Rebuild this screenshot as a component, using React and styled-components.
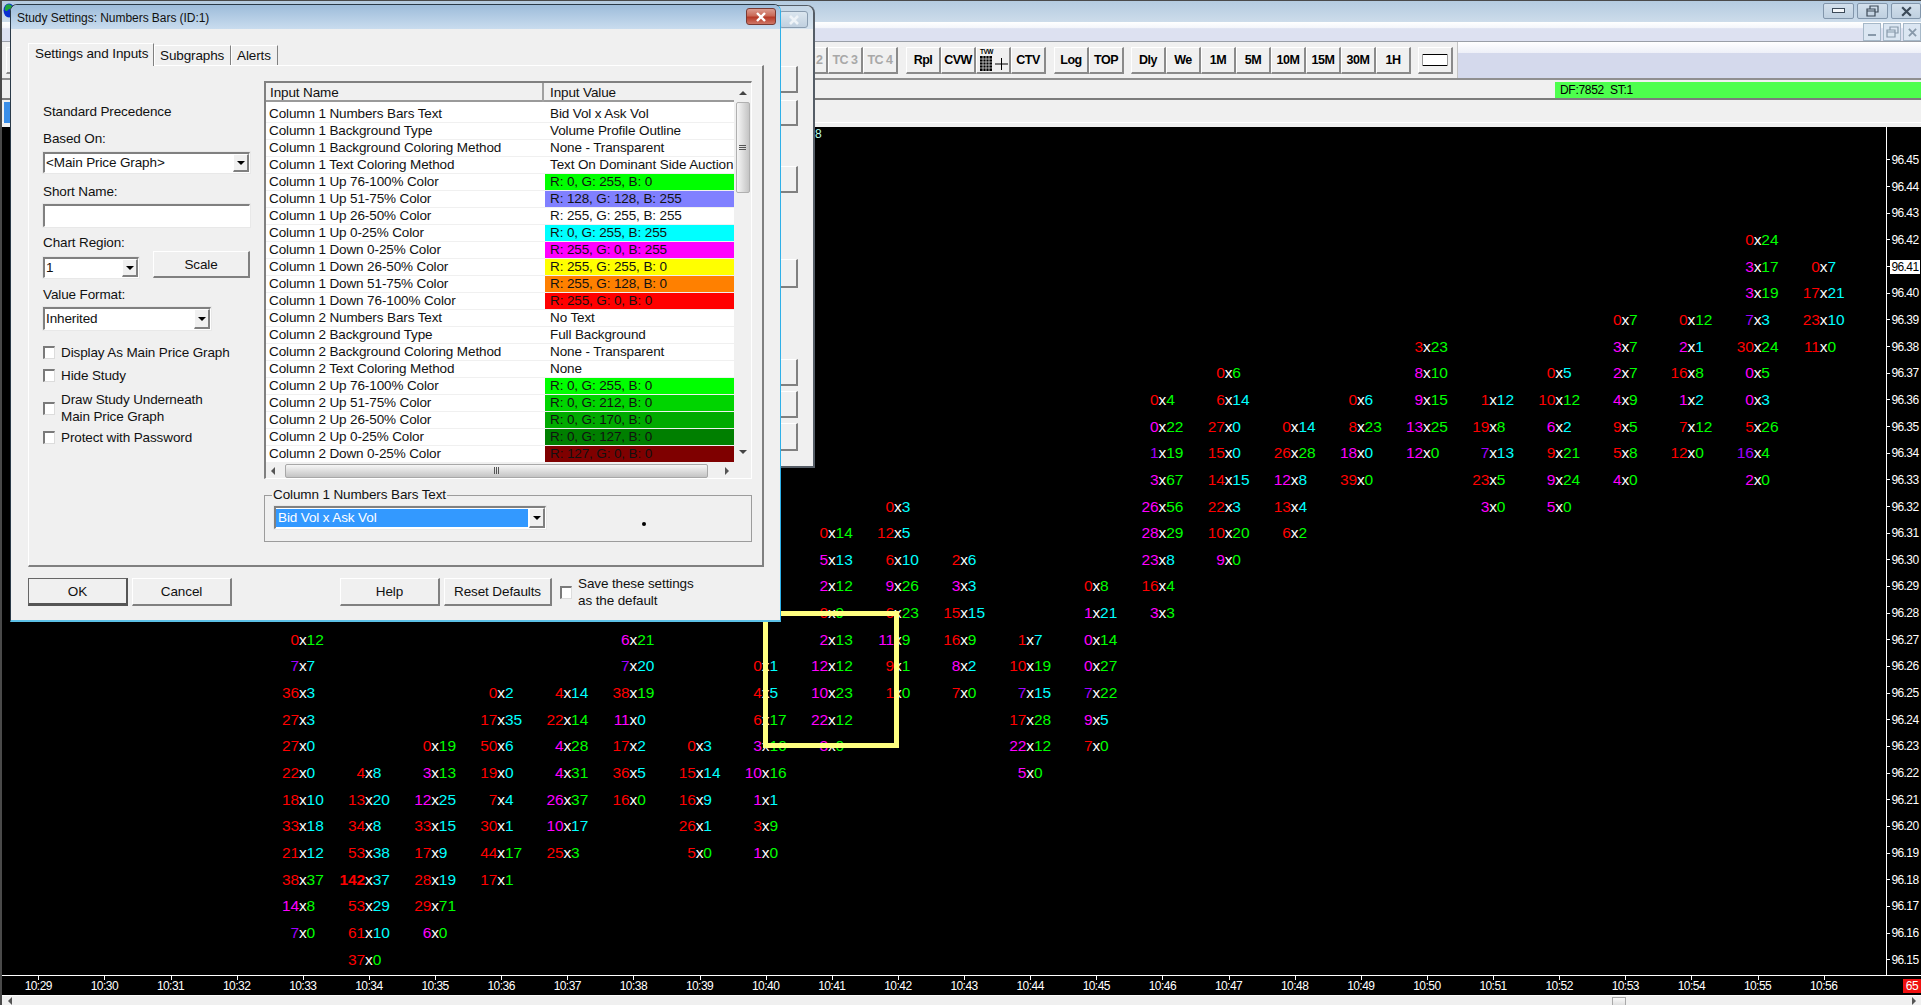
import React from 'react';
import styled, { createGlobalStyle } from 'styled-components';

const GlobalStyle = createGlobalStyle`
  html, body { margin: 0; padding: 0; background: #000; overflow: hidden; }
  * { box-sizing: border-box; }
  body { font-family: "Liberation Sans", Arial, sans-serif; }
`;

const MINUTE = 66.14;
const ROW = 26.67;

// one string per minute column: "price left x right colours"
const BARS = {
  33: ['27 0x12 RG', '26 7x7 PC', '25 36x3 RC', '24 27x3 RC', '23 27x0 RC', '22 22x0 RC', '21 18x10 RC', '20 33x18 RC', '19 21x12 RC', '18 38x37 RG', '17 14x8 MG', '16 7x0 PG'],
  34: ['22 4x8 RC', '21 13x20 RC', '20 34x8 RC', '19 53x38 RC', '18 142x37 RC', '17 53x29 RC', '16 61x10 RC', '15 37x0 RG'],
  35: ['23 0x19 RG', '22 3x13 MG', '21 12x25 MC', '20 33x15 RC', '19 17x9 RC', '18 28x19 RC', '17 29x71 RG', '16 6x0 MG'],
  36: ['25 0x2 RC', '24 17x35 RC', '23 50x6 RC', '22 19x0 RC', '21 7x4 RC', '20 30x1 RC', '19 44x17 RG', '18 17x1 RG'],
  37: ['25 4x14 RC', '24 22x14 RG', '23 4x28 MG', '22 4x31 MG', '21 26x37 MG', '20 10x17 MC', '19 25x3 RG'],
  38: ['27 6x21 MG', '26 7x20 PC', '25 38x19 RG', '24 11x0 MC', '23 17x2 RC', '22 36x5 RC', '21 16x0 RG'],
  39: ['23 0x3 RC', '22 15x14 RC', '21 16x9 RC', '20 26x1 RC', '19 5x0 RG'],
  40: ['26 0x1 RC', '25 4x5 RC', '24 6x17 RG', '23 3x16 MG', '22 10x16 MG', '21 1x1 MC', '20 3x9 RG', '19 1x0 MG'],
  41: ['31 0x14 RG', '30 5x13 MC', '29 2x12 MG', '28 0x9 RG', '27 2x13 MG', '26 12x12 MG', '25 10x23 MG', '24 22x12 MG', '23 3x0 MG'],
  42: ['32 0x3 RC', '31 12x5 RC', '30 6x10 RC', '29 9x26 MG', '28 6x23 RG', '27 11x9 MG', '26 9x1 RG', '25 1x0 RG'],
  43: ['30 2x6 RC', '29 3x3 MC', '28 15x15 RC', '27 16x9 RG', '26 8x2 MC', '25 7x0 RG'],
  44: ['27 1x7 RC', '26 10x19 RG', '25 7x15 PC', '24 17x28 RG', '23 22x12 MG', '22 5x0 MG'],
  45: ['29 0x8 RG', '28 1x21 MC', '27 0x14 MG', '26 0x27 MG', '25 7x22 PG', '24 9x5 MC', '23 7x0 RG'],
  46: ['36 0x4 RG', '35 0x22 MG', '34 1x19 PG', '33 3x67 MG', '32 26x56 MG', '31 28x29 MG', '30 23x8 MC', '29 16x4 RG', '28 3x3 MG'],
  47: ['37 0x6 RG', '36 6x14 RC', '35 27x0 RC', '34 15x0 RC', '33 14x15 RC', '32 22x3 RC', '31 10x20 RG', '30 9x0 MG'],
  48: ['35 0x14 RC', '34 26x28 RG', '33 12x8 MC', '32 13x4 RC', '31 6x2 RG'],
  49: ['36 0x6 RC', '35 8x23 RG', '34 18x0 MC', '33 39x0 RG'],
  50: ['38 3x23 RG', '37 8x10 MG', '36 9x15 MG', '35 13x25 MG', '34 12x0 MG'],
  51: ['36 1x12 RC', '35 19x8 RG', '34 7x13 PC', '33 23x5 RG', '32 3x0 MG'],
  52: ['37 0x5 RC', '36 10x12 RG', '35 6x2 MC', '34 9x21 RG', '33 9x24 MG', '32 5x0 MG'],
  53: ['39 0x7 RG', '38 3x7 MG', '37 2x7 MG', '36 4x9 MG', '35 9x5 RG', '34 5x8 RG', '33 4x0 MG'],
  54: ['39 0x12 RG', '38 2x1 MC', '37 16x8 RG', '36 1x2 MC', '35 7x12 RG', '34 12x0 RG'],
  55: ['42 0x24 RG', '41 3x17 MG', '40 3x19 MG', '39 7x3 PC', '38 30x24 RG', '37 0x5 MG', '36 0x3 MC', '35 5x26 RG', '34 16x4 PG', '33 2x0 MG'],
  56: ['41 0x7 RC', '40 17x21 RC', '39 23x10 RC', '38 11x0 RG'],
};

const TEXT_COLOURS = { R: '#ff0000', M: '#ff00ff', P: '#a000ff', C: '#00ffff', G: '#00ff00' };

const CELLS = Object.entries(BARS).flatMap(([minute, rows]) =>
  rows.map((row) => {
    const [cents, volume, colours] = row.split(' ');
    const [bid, ask] = volume.split('x');
    return { minute: Number(minute), cents: Number(cents), bid, ask, left: colours[0], right: colours[1] };
  })
);

const PRICES = Array.from({ length: 31 }, (_, i) => 45 - i);
const MINUTES = Array.from({ length: 28 }, (_, i) => 29 + i);

const INPUTS = [
  ['Column 1 Numbers Bars Text', 'Bid Vol x Ask Vol'],
  ['Column 1 Background Type', 'Volume Profile Outline'],
  ['Column 1 Background Coloring Method', 'None - Transparent'],
  ['Column 1 Text Coloring Method', 'Text On Dominant Side Auction'],
  ['Column 1 Up 76-100% Color', 'R: 0, G: 255, B: 0', '#00ff00'],
  ['Column 1 Up 51-75% Color', 'R: 128, G: 128, B: 255', '#8080ff'],
  ['Column 1 Up 26-50% Color', 'R: 255, G: 255, B: 255', '#ffffff'],
  ['Column 1 Up 0-25% Color', 'R: 0, G: 255, B: 255', '#00ffff'],
  ['Column 1 Down 0-25% Color', 'R: 255, G: 0, B: 255', '#ff00ff'],
  ['Column 1 Down 26-50% Color', 'R: 255, G: 255, B: 0', '#ffff00'],
  ['Column 1 Down 51-75% Color', 'R: 255, G: 128, B: 0', '#ff8000'],
  ['Column 1 Down 76-100% Color', 'R: 255, G: 0, B: 0', '#ff0000'],
  ['Column 2 Numbers Bars Text', 'No Text'],
  ['Column 2 Background Type', 'Full Background'],
  ['Column 2 Background Coloring Method', 'None - Transparent'],
  ['Column 2 Text Coloring Method', 'None'],
  ['Column 2 Up 76-100% Color', 'R: 0, G: 255, B: 0', '#00ff00'],
  ['Column 2 Up 51-75% Color', 'R: 0, G: 212, B: 0', '#00d400'],
  ['Column 2 Up 26-50% Color', 'R: 0, G: 170, B: 0', '#00aa00'],
  ['Column 2 Up 0-25% Color', 'R: 0, G: 127, B: 0', '#007f00'],
  ['Column 2 Down 0-25% Color', 'R: 127, G: 0, B: 0', '#7f0000'],
];

const Shell = styled.div`
  position: relative;
  width: 1921px;
  height: 1005px;
  overflow: hidden;
  display: flex;
  flex-direction: column;
  background: #f0f0f0;
  border-top: 1px solid #4a4a4a;
  border-left: 2px solid #4a4a4a;
`;

const TitleBar = styled.div`
  height: 21px;
  flex: none;
  display: flex;
  align-items: flex-start;
  justify-content: space-between;
  padding-top: 2px;
  background: linear-gradient(#b4cbe0, #cddcea);
`;

const WindowButtons = styled.div`
  display: flex;
  gap: 3px;
`;

const WindowButton = styled.div`
  width: ${(p) => p.$w || 31}px;
  height: 16px;
  display: flex;
  align-items: center;
  justify-content: center;
  border: 1px solid #8296ab;
  border-radius: 2px;
  background: linear-gradient(#d3e0ec, #bfd0e0);
`;

const MdiBar = styled.div`
  height: 20px;
  flex: none;
  display: flex;
  justify-content: flex-end;
  background: linear-gradient(#ffffff 0, #f4f6fb 30%, #dde1f1 35%, #dde1f1 100%);
  border-bottom: 1px solid #9a9fa8;
`;

const MdiButtons = styled.div`
  display: flex;
  gap: 2px;
  margin-top: 1px;
`;

const MdiButton = styled.div`
  width: 18px;
  height: 18px;
  display: flex;
  align-items: center;
  justify-content: center;
  border: 1px solid #a6b8c8;
  background: #dbe6f2;
`;

const Toolbar = styled.div`
  height: 38px;
  flex: none;
  display: flex;
  border-bottom: 2px solid #8f8f8f;
  background: linear-gradient(#ffffff 0, #eef0f8 30%, #d4d9ec 31%, #d4d9ec 100%);
`;

const ToolStrip = styled.div`
  width: 1456px;
  flex: none;
  display: flex;
  align-items: center;
  padding-top: 1px;
  background: #f0f0f0;
  border-right: 1px solid #c4c4c4;
`;

const ToolGroup = styled.div`
  display: flex;
  margin-left: ${(p) => p.$offset}px;
`;

const ToolButton = styled.div`
  width: 35px;
  height: 27px;
  display: flex;
  align-items: center;
  justify-content: center;
  font-size: 12.5px;
  font-weight: 700;
  letter-spacing: -0.5px;
  color: ${(p) => (p.$off ? '#a8a8a8' : '#000')};
  background: #f0f0f0;
  border-top: 1px solid #fff;
  border-left: 1px solid #fff;
  border-right: 2px solid #8a8a8a;
  border-bottom: 2px solid #8a8a8a;
`;

const StatusRow = styled.div`
  height: 20px;
  flex: none;
  display: flex;
  justify-content: flex-end;
  padding-top: 2px;
  background: #f0f0f0;
  border-bottom: 2px solid #7c7c7c;
`;

const FeedBox = styled.div`
  width: 366px;
  display: flex;
  align-items: center;
  padding-left: 5px;
  font-size: 12px;
  letter-spacing: -0.3px;
  white-space: pre;
  background: #4dff4d;
  color: #000;
`;

const TabStrip = styled.div`
  height: 27px;
  flex: none;
  background: linear-gradient(#f0f0f0 0, #f0f0f0 81%, #fff 81%, #fff 85%, #f0f0f0 85%);
`;

const ActiveSheet = styled.div`
  width: 10px;
  height: 21px;
  margin: 2px 0 0 2px;
  background: #3a8ee8;
`;

const Chart = styled.div`
  height: 848px;
  flex: none;
  display: flex;
  background: #000;
`;

const Plot = styled.div`
  position: relative;
  width: 1884px;
  height: 100%;
  padding: 19.67px 0 0 3.23px;
  display: grid;
  grid-template-columns: repeat(28, ${MINUTE}px);
  grid-template-rows: repeat(31, ${ROW}px);
`;

const Bar = styled.div`
  display: grid;
  grid-template-columns: 1fr auto 1fr;
  align-items: center;
  font-size: 15.5px;
  letter-spacing: -0.1px;
  color: #fff;
  white-space: nowrap;
`;

const Bid = styled.span`
  text-align: right;
  color: ${(p) => TEXT_COLOURS[p.$tone]};
  font-weight: ${(p) => (p.$heavy ? 700 : 400)};
`;

const Ask = styled.span`
  color: ${(p) => TEXT_COLOURS[p.$tone]};
`;

const Stray = styled.span`
  position: absolute;
  left: 813px;
  top: 0;
  font-size: 12px;
  color: #b8ffe8;
`;

const RangeBox = styled.div`
  position: absolute;
  left: 761px;
  top: 484px;
  width: 136px;
  height: 137px;
  border: 5px solid #ffff80;
`;

const PriceScale = styled.div`
  flex: 1;
  border-left: 1px solid #fff;
  padding-top: 19.67px;
`;

const PriceRow = styled.div`
  height: ${ROW}px;
  display: flex;
  align-items: center;
  &::before {
    content: '';
    width: 3px;
    height: 1px;
    background: #fff;
  }
`;

const PriceLabel = styled.span`
  width: 30px;
  height: 14px;
  line-height: 14px;
  text-align: center;
  font-size: 12px;
  letter-spacing: -0.6px;
  color: ${(p) => (p.$current ? '#000' : '#fff')};
  background: ${(p) => (p.$current ? '#fff' : 'transparent')};
`;

const TimeAxis = styled.div`
  height: 21px;
  flex: none;
  display: flex;
  padding-left: 3.23px;
  background: #000;
  border-top: 1px solid #fff;
  border-bottom: 1px solid #fff;
`;

const TimeTick = styled.div`
  width: ${MINUTE}px;
  flex: none;
  padding-top: 3px;
  text-align: center;
  font-size: 12px;
  letter-spacing: -0.55px;
  color: #fff;
  position: relative;
  &::before {
    content: '';
    position: absolute;
    left: 50%;
    top: 0;
    width: 1px;
    height: 4px;
    background: #fff;
  }
`;

const CountBadge = styled.div`
  width: 18px;
  height: 14px;
  margin: 3px 0 0 auto;
  line-height: 14px;
  text-align: center;
  font-size: 12px;
  letter-spacing: -0.4px;
  color: #fff;
  background: #f01010;
`;

const BottomScroll = styled.div`
  flex: 1;
  display: flex;
  align-items: center;
  padding: 0 5px 0 6px;
  background: #f0f0f0;
`;

const ScrollKnob = styled.div`
  width: 14px;
  height: 9px;
  margin: 1px 0 0 1600px;
  background: linear-gradient(#fafafa, #dcdcdc);
  border: 1px solid #a9a9a9;
  border-bottom: none;
`;

const Arrow = styled.span`
  display: block;
  flex: none;
  width: 0;
  height: 0;
  margin: ${(p) => p.$m || '0'};
  ${(p) => p.$dir === 'down' && `border-left: ${p.$s}px solid transparent; border-right: ${p.$s}px solid transparent; border-top: ${p.$s}px solid ${p.$c || '#000'};`}
  ${(p) => p.$dir === 'up' && `border-left: ${p.$s}px solid transparent; border-right: ${p.$s}px solid transparent; border-bottom: ${p.$s}px solid ${p.$c || '#000'};`}
  ${(p) => p.$dir === 'left' && `border-top: ${p.$s}px solid transparent; border-bottom: ${p.$s}px solid transparent; border-right: ${p.$s}px solid ${p.$c || '#000'};`}
  ${(p) => p.$dir === 'right' && `border-top: ${p.$s}px solid transparent; border-bottom: ${p.$s}px solid transparent; border-left: ${p.$s}px solid ${p.$c || '#000'};`}
`;

const BackWindow = styled.div`
  position: absolute;
  left: 690px;
  top: 4px;
  width: 123px;
  height: 463px;
  display: flex;
  flex-direction: column;
  background: #f0f0f0;
  border: 1px solid #555d66;
  border-width: 1px 2px 2px 0;
  border-top-right-radius: 8px;
`;

const BackTitle = styled.div`
  height: 23px;
  flex: none;
  display: flex;
  justify-content: flex-end;
  padding: 5px 5px 0 0;
  background: linear-gradient(#c4d6e6, #d7e4ef);
  border-top-right-radius: 7px;
`;

const BackClose = styled.div`
  width: 29px;
  height: 17px;
  display: flex;
  align-items: center;
  justify-content: center;
  border: 1px solid #8a9db0;
  border-radius: 3px;
  background: linear-gradient(#dbe6ef, #c0d0df);
`;

const BackButtons = styled.div`
  display: flex;
  flex-direction: column;
  align-items: flex-end;
  padding-right: 15px;
`;

const SideButton = styled.div`
  width: 60px;
  height: ${(p) => p.$h}px;
  margin-top: ${(p) => p.$top}px;
  background: #f0f0f0;
  border-right: 2px solid #808080;
  border-bottom: 2px solid #808080;
  border-top: 1px solid #fff;
`;

const Dialog = styled.div`
  position: absolute;
  left: 8px;
  top: 3px;
  width: 771px;
  height: 618px;
  display: flex;
  flex-direction: column;
  font-size: 13.5px;
  letter-spacing: -0.12px;
  color: #111;
  background: #f0f0f0;
  border: 1px solid #2a3a48;
  border-right-color: #2fb0e8;
  border-bottom: 2px solid #5cc0e6;
  border-radius: 7px 7px 0 0;
`;

const DialogTitle = styled.div`
  height: 24px;
  flex: none;
  display: flex;
  align-items: flex-start;
  justify-content: space-between;
  padding: 3px 4px 0 6px;
  border-radius: 6px 6px 0 0;
  background: linear-gradient(#9dbcda, #c9dcee);
`;

const TitleText = styled.span`
  margin-top: 3px;
  font-size: 12px;
  letter-spacing: -0.05px;
  color: #111;
`;

const CloseButton = styled.div`
  width: 30px;
  height: 17px;
  display: flex;
  align-items: center;
  justify-content: center;
  border: 1px solid #7a3a32;
  border-radius: 3px;
  background: linear-gradient(#dc9c90 0, #c96a58 45%, #b63a28 55%, #cf7766 100%);
`;

const DialogBody = styled.div`
  flex: 1;
  display: flex;
  flex-direction: column;
  padding: 13px 0 0 17px;
`;

const Tabs = styled.div`
  display: flex;
  align-items: flex-end;
  height: 23px;
`;

const Tab = styled.div`
  height: ${(p) => (p.$on ? 23 : 20)}px;
  width: ${(p) => p.$w}px;
  padding-left: ${(p) => (p.$on ? 6 : 5)}px;
  line-height: ${(p) => (p.$on ? 19 : 20)}px;
  background: #f0f0f0;
  border-top: 1px solid #fff;
  border-left: 1px solid #fff;
  border-right: 1px solid #808080;
  white-space: nowrap;
  position: relative;
  margin-bottom: ${(p) => (p.$on ? -1 : 0)}px;
`;

const Panel = styled.div`
  width: 736px;
  height: 502px;
  display: flex;
  gap: 14px;
  padding: 15px 0 0 14px;
  border: 1px solid #fff;
  border-right: 2px solid #808080;
  border-bottom: 2px solid #808080;
`;

const LeftColumn = styled.div`
  width: 207px;
  flex: none;
  display: flex;
  flex-direction: column;
`;

const Caption = styled.div`
  height: 16px;
  line-height: 16px;
  margin-top: ${(p) => p.$top}px;
  white-space: nowrap;
`;

const Sunken = styled.div`
  display: flex;
  align-items: stretch;
  background: #fff;
  border-top: 2px solid #808080;
  border-left: 2px solid #808080;
  border-right: 1px solid #fff;
  border-bottom: 1px solid #fff;
  box-shadow: 0 0 0 1px #e8e8e8;
`;

const Select = styled(Sunken)`
  width: ${(p) => p.$w}px;
  height: ${(p) => p.$h}px;
  margin-top: ${(p) => p.$top || 0}px;
`;

const SelectValue = styled.span`
  flex: 1;
  padding-left: 1px;
  line-height: ${(p) => p.$h - 4}px;
  white-space: nowrap;
  overflow: hidden;
`;

const DropButton = styled.span`
  width: 16px;
  flex: none;
  display: flex;
  align-items: center;
  justify-content: center;
  background: #f0f0f0;
  border-top: 1px solid #fff;
  border-left: 1px solid #fff;
  border-right: 2px solid #808080;
  border-bottom: 2px solid #808080;
`;

const TextBox = styled(Sunken)`
  height: 23px;
  margin-top: 4px;
`;

const RegionRow = styled.div`
  display: flex;
  align-items: flex-end;
  justify-content: space-between;
`;

const Raised = styled.div`
  display: flex;
  align-items: center;
  justify-content: center;
  white-space: nowrap;
  background: #f0f0f0;
  border-top: 1px solid #fff;
  border-left: 1px solid #fff;
  border-right: 2px solid #808080;
  border-bottom: 2px solid #808080;
`;

const ScaleButton = styled(Raised)`
  width: 97px;
  height: 27px;
`;

const CheckRow = styled.div`
  display: flex;
  align-items: center;
  gap: 6px;
  margin-top: ${(p) => p.$top}px;
  line-height: 17px;
`;

const Check = styled.span`
  width: 12px;
  height: 13px;
  flex: none;
  background: #fff;
  border-top: 2px solid #7a7a7a;
  border-left: 2px solid #7a7a7a;
  border-right: 1px solid #dcdcdc;
  border-bottom: 1px solid #dcdcdc;
`;

const RightColumn = styled.div`
  width: 488px;
  flex: none;
  display: flex;
  flex-direction: column;
`;

const Table = styled.div`
  height: 398px;
  flex: none;
  display: flex;
  background: #f0f0f0;
  border-top: 2px solid #808080;
  border-left: 2px solid #808080;
  border-right: 1px solid #fff;
  border-bottom: 1px solid #fff;
`;

const TableMain = styled.div`
  width: 468px;
  flex: none;
  display: flex;
  flex-direction: column;
`;

const HeaderRow = styled.div`
  display: grid;
  grid-template-columns: 278px 1fr;
  height: 19px;
  line-height: 20px;
  background: #f0f0f0;
  border-bottom: 2px solid #9a9a9a;
`;

const HeaderCell = styled.div`
  padding-left: ${(p) => p.$pad}px;
  border-right: ${(p) => (p.$line ? '2px solid #a0a0a0' : 'none')};
`;

const RowList = styled.div`
  background: #fff;
  padding-top: 4px;
  height: 361px;
  flex: none;
`;

const InputRow = styled.div`
  display: grid;
  grid-template-columns: 278px 1fr;
  height: 17px;
  line-height: 16px;
  border-bottom: 1px solid #f0f0f0;
`;

const NameCell = styled.div`
  padding-left: 3px;
  white-space: nowrap;
`;

const ValueCell = styled.div`
  padding-left: 5px;
  margin-left: 1px;
  white-space: nowrap;
  overflow: hidden;
  color: #111;
  background: ${(p) => p.$fill || 'transparent'};
`;

const HScroll = styled.div`
  flex: 1;
  display: flex;
  align-items: center;
  background: #f0f0f0;
`;

const HThumb = styled.div`
  width: 423px;
  height: 14px;
  margin: 0 0 0 10px;
  display: flex;
  align-items: center;
  justify-content: center;
  gap: 1px;
  border: 1px solid #a8a8a8;
  border-radius: 2px;
  background: linear-gradient(#f6f6f6, #d8d8d8 60%, #c4c4c4);
`;

const GripH = styled.span`
  width: 1px;
  height: 7px;
  background: #555;
`;

const VScroll = styled.div`
  flex: 1;
  display: flex;
  flex-direction: column;
  align-items: center;
  background: #f0f0f0;
  padding-top: 8px;
`;

const VThumb = styled.div`
  width: 14px;
  height: 91px;
  margin-top: 7px;
  display: flex;
  flex-direction: column;
  align-items: center;
  justify-content: center;
  gap: 1px;
  border: 1px solid #b0b0b0;
  border-radius: 2px;
  background: linear-gradient(90deg, #f6f6f6, #d8d8d8 60%, #c4c4c4);
`;

const GripV = styled.span`
  width: 7px;
  height: 1px;
  background: #555;
`;

const GroupBox = styled.fieldset`
  height: 55px;
  margin: 8px 0 0;
  padding: 0 0 0 9px;
  display: flex;
  border: 1px solid #9c9c9c;
`;

const GroupLegend = styled.legend`
  height: 16px;
  line-height: 16px;
  padding: 0 1px;
  margin-left: -2px;
`;

const ComboShell = styled(Sunken)`
  width: 272px;
  height: 23px;
  margin-top: 3px;
`;

const ComboValue = styled.span`
  flex: 1;
  padding-left: 2px;
  line-height: 17px;
  color: #fff;
  background: #3399ff;
  border: 1px solid #fff;
  border-width: 1px 1px 1px 0;
`;

const Dot = styled.span`
  width: 4px;
  height: 4px;
  margin: 19px 0 0 96px;
  background: #000;
  border-radius: 50%;
`;

const Footer = styled.div`
  display: flex;
  margin-top: 11px;
`;

const FootButton = styled(Raised)`
  width: ${(p) => p.$w}px;
  height: 28px;
  margin-left: ${(p) => p.$gap || 0}px;
  ${(p) => p.$main && 'border-right: 2px solid #555; border-bottom: 3px solid #555; border-top: 1px solid #666; border-left: 1px solid #666;'}
`;

const SaveCheck = styled(CheckRow)`
  margin: 0 0 0 8px;
  height: 28px;
`;

const Cross = ({ size = 10, color = '#fff', weight = 2.4 }) => (
  <svg width={size + 2} height={size} viewBox="0 0 12 10">
    <path d="M2 1 L10 9 M10 1 L2 9" stroke={color} strokeWidth={weight} fill="none" />
  </svg>
);

const Globe = () => (
  <svg width="12" height="15" viewBox="0 0 12 15" style={{ marginLeft: 1 }}>
    <ellipse cx="6" cy="7.5" rx="5.5" ry="7" fill="#0a2fd0" />
    <path d="M3 2 C6 0 9 2 10 5 C8 7 6 5 5 7 C4 9 2 8 1.5 6 Z" fill="#1fa53a" />
  </svg>
);

const RestoreGlyph = ({ color }) => (
  <svg width="13" height="12" viewBox="0 0 13 12">
    <path d="M4 4V1h8v6H9M1 4h8v7H1z M1 6h8" stroke={color} strokeWidth="1.2" fill="none" />
  </svg>
);

const GridGlyph = () => (
  <svg width="32" height="25" viewBox="0 0 32 25">
    <text x="3" y="6" fontSize="6.5" fontFamily="Liberation Sans, sans-serif" fontWeight="700">TVW</text>
    <rect x="3" y="8" width="12" height="15" fill="#000" />
    <path d="M3 11h12M3 14h12M3 17h12M3 20h12M6 8v15M9 8v15M12 8v15" stroke="#f0f0f0" strokeWidth="0.7" />
    <path d="M18 16h13M24.5 10v12" stroke="#000" strokeWidth="1" />
  </svg>
);

const WideGlyph = () => (
  <svg width="26" height="12" viewBox="0 0 26 12">
    <rect width="26" height="12" fill="#fff" />
    <path d="M0 .5h26M0 11.5h26" stroke="#000" />
    <path d="M.5 0v12M25.5 0v12" stroke="#999" />
  </svg>
);

const DropDown = () => (
  <DropButton>
    <Arrow $dir="down" $s={4} />
  </DropButton>
);

const SelectBox = ({ w, h, top, value }) => (
  <Select $w={w} $h={h} $top={top}>
    <SelectValue $h={h}>{value}</SelectValue>
    <DropDown />
  </Select>
);

const SettingsTable = () => (
  <Table>
    <TableMain>
      <HeaderRow>
        <HeaderCell $pad={4} $line>Input Name</HeaderCell>
        <HeaderCell $pad={6}>Input Value</HeaderCell>
      </HeaderRow>
      <RowList>
        {INPUTS.map(([name, value, fill]) => (
          <InputRow key={name}>
            <NameCell>{name}</NameCell>
            <ValueCell $fill={fill}>{value}</ValueCell>
          </InputRow>
        ))}
      </RowList>
      <HScroll>
        <Arrow $dir="left" $s={4} $c="#555" $m="0 0 0 5px" />
        <HThumb>
          <GripH /><GripH /><GripH />
        </HThumb>
        <Arrow $dir="right" $s={4} $c="#555" $m="0 0 0 17px" />
      </HScroll>
    </TableMain>
    <VScroll>
      <Arrow $dir="up" $s={4} $c="#444" />
      <VThumb>
        <GripV /><GripV /><GripV />
      </VThumb>
      <Arrow $dir="down" $s={4} $c="#444" $m="257px 0 0" />
    </VScroll>
  </Table>
);

const SettingsDialog = () => (
  <Dialog>
    <DialogTitle>
      <TitleText>Study Settings: Numbers Bars (ID:1)</TitleText>
      <CloseButton><Cross /></CloseButton>
    </DialogTitle>
    <DialogBody>
      <Tabs>
        <Tab $on $w={126}>Settings and Inputs</Tab>
        <Tab $w={77}>Subgraphs</Tab>
        <Tab $w={47}>Alerts</Tab>
      </Tabs>
      <Panel>
        <LeftColumn>
          <Caption $top={23}>Standard Precedence</Caption>
          <Caption $top={11}>Based On:</Caption>
          <SelectBox w={207} h={21} top={5} value="<Main Price Graph>" />
          <Caption $top={11}>Short Name:</Caption>
          <TextBox />
          <Caption $top={8}>Chart Region:</Caption>
          <RegionRow>
            <SelectBox w={96} h={21} top={0} value="1" />
            <ScaleButton>Scale</ScaleButton>
          </RegionRow>
          <Caption $top={9}>Value Format:</Caption>
          <SelectBox w={168} h={23} top={4} value="Inherited" />
          <CheckRow $top={14}><Check />Display As Main Price Graph</CheckRow>
          <CheckRow $top={6}><Check />Hide Study</CheckRow>
          <CheckRow $top={7}><Check /><span>Draw Study Underneath<br />Main Price Graph</span></CheckRow>
          <CheckRow $top={4}><Check />Protect with Password</CheckRow>
        </LeftColumn>
        <RightColumn>
          <SettingsTable />
          <GroupBox>
            <GroupLegend>Column 1 Numbers Bars Text</GroupLegend>
            <ComboShell>
              <ComboValue>Bid Vol x Ask Vol</ComboValue>
              <DropDown />
            </ComboShell>
            <Dot />
          </GroupBox>
        </RightColumn>
      </Panel>
      <Footer>
        <FootButton $w={100} $main>OK</FootButton>
        <FootButton $w={100} $gap={4}>Cancel</FootButton>
        <FootButton $w={100} $gap={108}>Help</FootButton>
        <FootButton $w={108} $gap={4}>Reset Defaults</FootButton>
        <SaveCheck><Check /><span>Save these settings<br />as the default</span></SaveCheck>
      </Footer>
    </DialogBody>
  </Dialog>
);

const App = () => (
  <>
    <GlobalStyle />
    <Shell>
      <TitleBar>
        <Globe />
        <WindowButtons>
          <WindowButton>
            <svg width="13" height="6"><rect x="0.5" y="0.5" width="12" height="4" fill="#f4f7fa" stroke="#3c4a58" /></svg>
          </WindowButton>
          <WindowButton><RestoreGlyph color="#3c4a58" /></WindowButton>
          <WindowButton $w={30}><Cross size={11} color="#3c4a58" weight={2} /></WindowButton>
        </WindowButtons>
      </TitleBar>
      <MdiBar>
        <MdiButtons>
          <MdiButton>
            <svg width="9" height="9"><rect y="6" width="8" height="2" fill="#8899aa" /></svg>
          </MdiButton>
          <MdiButton><RestoreGlyph color="#8899aa" /></MdiButton>
          <MdiButton><Cross size={9} color="#8899aa" weight={2} /></MdiButton>
        </MdiButtons>
      </MdiBar>
      <Toolbar>
        <ToolStrip>
          <ToolGroup $offset={4}><ToolButton /></ToolGroup>
          <ToolGroup $offset={752}>
            <ToolButton $off>TC 2</ToolButton>
            <ToolButton $off>TC 3</ToolButton>
            <ToolButton $off>TC 4</ToolButton>
          </ToolGroup>
          <ToolGroup $offset={8}>
            <ToolButton>Rpl</ToolButton>
            <ToolButton>CVW</ToolButton>
            <ToolButton><GridGlyph /></ToolButton>
            <ToolButton>CTV</ToolButton>
          </ToolGroup>
          <ToolGroup $offset={8}>
            <ToolButton>Log</ToolButton>
            <ToolButton>TOP</ToolButton>
          </ToolGroup>
          <ToolGroup $offset={7}>
            {['Dly', 'We', '1M', '5M', '10M', '15M', '30M', '1H'].map((label) => (
              <ToolButton key={label}>{label}</ToolButton>
            ))}
          </ToolGroup>
          <ToolGroup $offset={7}>
            <ToolButton><WideGlyph /></ToolButton>
          </ToolGroup>
        </ToolStrip>
      </Toolbar>
      <StatusRow>
        <FeedBox>DF:7852  ST:1</FeedBox>
      </StatusRow>
      <TabStrip>
        <ActiveSheet />
      </TabStrip>
      <Chart>
        <Plot>
          {CELLS.map((cell) => (
            <Bar
              key={`${cell.minute}-${cell.cents}`}
              style={{ gridColumn: cell.minute - 28, gridRow: 46 - cell.cents }}
            >
              <Bid $tone={cell.left} $heavy={cell.bid === '142'}>{cell.bid}</Bid>
              <span>x</span>
              <Ask $tone={cell.right}>{cell.ask}</Ask>
            </Bar>
          ))}
          <Stray>8</Stray>
          <RangeBox />
        </Plot>
        <PriceScale>
          {PRICES.map((cents) => (
            <PriceRow key={cents}>
              <PriceLabel $current={cents === 41}>96.{cents}</PriceLabel>
            </PriceRow>
          ))}
        </PriceScale>
      </Chart>
      <TimeAxis>
        {MINUTES.map((minute) => (
          <TimeTick key={minute}>10:{minute}</TimeTick>
        ))}
        <CountBadge>65</CountBadge>
      </TimeAxis>
      <BottomScroll>
        <Arrow $dir="left" $s={4} $c="#555" />
        <ScrollKnob />
        <Arrow $dir="right" $s={4} $c="#555" $m="0 0 0 auto" />
      </BottomScroll>
      <BackWindow>
        <BackTitle>
          <BackClose><Cross color="#eef3f7" weight={2.6} /></BackClose>
        </BackTitle>
        <BackButtons>
          <SideButton $top={37} $h={27} />
          <SideButton $top={7} $h={26} />
          <SideButton $top={40} $h={27} />
          <SideButton $top={66} $h={29} />
          <SideButton $top={71} $h={27} />
          <SideButton $top={5} $h={27} />
          <SideButton $top={5} $h={28} />
        </BackButtons>
      </BackWindow>
      <SettingsDialog />
    </Shell>
  </>
);

export default App;
